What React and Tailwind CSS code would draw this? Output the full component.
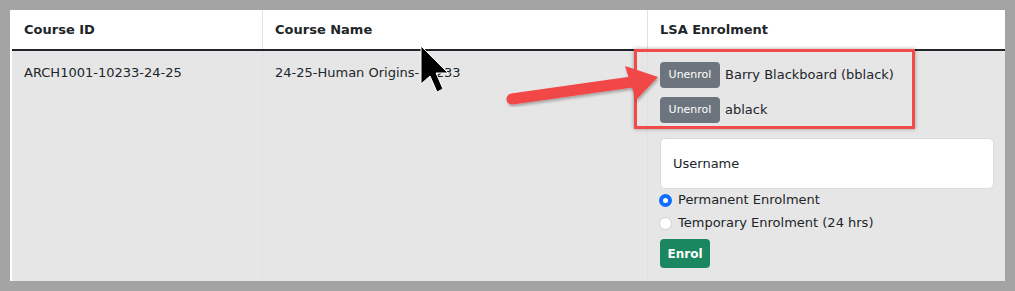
export default function App() {
  const font = { fontFamily: '"DejaVu Sans", Verdana, sans-serif' };
  return (
    <div className="relative w-[1015px] h-[291px] bg-[#a4a4a4] pt-[10px] pl-[10px] overflow-hidden" style={font}>
      <div className="w-[995px] h-[271px] bg-[#e6e6e6] flex flex-col border-l-2 border-white text-[#212529] text-[13px]">
        <div className="flex h-[41px] bg-white border-b-2 border-[#212529] font-bold">
          <div className="w-[250px] flex items-center pl-[12px]">Course ID</div>
          <div className="w-[385px] flex items-center pl-[12px] border-l border-[#dee2e6]">Course Name</div>
          <div className="flex-1 flex items-center pl-[12px] border-l border-[#dee2e6]">LSA Enrolment</div>
        </div>
        <div className="flex flex-1">
          <div className="w-[250px] pl-[12px] pt-[12px]">ARCH1001-10233-24-25</div>
          <div className="w-[385px] pl-[12px] pt-[12px] border-l border-[#e1e1e1]">24-25-Human Origins-10233</div>
          <div className="flex-1 pl-[12px] pr-[11px] pt-[11px] border-l border-[#e1e1e1] flex flex-col">
            <div className="flex items-center gap-[5px]">
              <div className="w-[60px] h-[26px] rounded-[4px] bg-[#6c757d] text-white text-[11px] flex items-center justify-center">Unenrol</div>
              <span>Barry Blackboard (bblack)</span>
            </div>
            <div className="flex items-center gap-[5px] mt-[9px]">
              <div className="w-[60px] h-[26px] rounded-[4px] bg-[#6c757d] text-white text-[11px] flex items-center justify-center">Unenrol</div>
              <span>ablack</span>
            </div>
            <div className="mt-[15px] h-[51px] rounded-[5px] bg-white border border-[#d9dde1] pl-[12px] flex items-center">Username</div>
            <div className="mt-[1px] h-[20px] flex items-center gap-[6px] -ml-[1px]">
              <span className="w-[13px] h-[13px] rounded-full bg-[#0d6efd] flex items-center justify-center">
                <span className="w-[5px] h-[5px] rounded-full bg-white"></span>
              </span>
              <span>Permanent Enrolment</span>
            </div>
            <div className="mt-[3px] h-[20px] flex items-center gap-[6px] -ml-[1px]">
              <span className="w-[13px] h-[13px] rounded-full bg-white border border-[#d0d0d0]"></span>
              <span>Temporary Enrolment (24 hrs)</span>
            </div>
            <div className="mt-[6px] w-[50px] h-[29px] rounded-[4px] bg-[#1a8760] text-white font-bold text-[12px] flex items-center justify-center">Enrol</div>
          </div>
        </div>
      </div>

      <div className="absolute left-[634px] top-[49px] w-[281px] h-[80px] border-[3px] border-[#f04a4a] shadow-[0_0_4px_rgba(0,0,0,0.35)] pointer-events-none"></div>

      <svg className="absolute left-0 top-0 pointer-events-none" width="1015" height="291" viewBox="0 0 1015 291">
        <defs>
          <filter id="sh" x="-20%" y="-20%" width="140%" height="140%">
            <feDropShadow dx="1" dy="2" stdDeviation="1.5" floodColor="#000" floodOpacity="0.3" />
          </filter>
        </defs>
        <g filter="url(#sh)">
          <line x1="512" y1="99" x2="632" y2="82" stroke="#f14646" strokeWidth="11" strokeLinecap="round" />
          <polygon points="625,66 658,77 636,100" fill="#f14646" />
        </g>
        <path d="M421 46 L421 84 L430 76 L437 92 L443 89 L436 73 L448 73 Z" fill="#000" stroke="#fff" strokeWidth="1" />
      </svg>
    </div>
  );
}
